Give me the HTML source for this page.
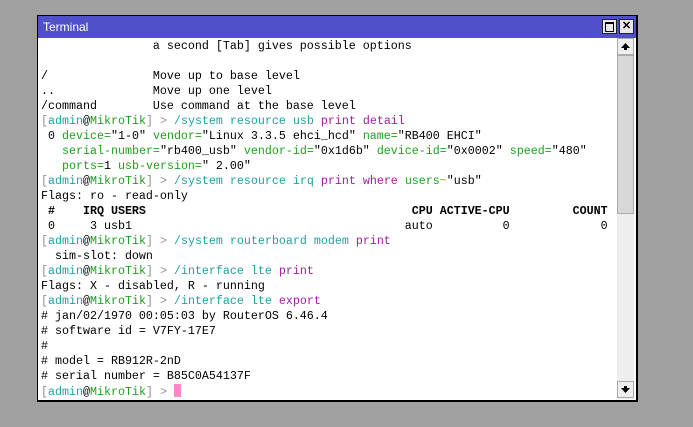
<!DOCTYPE html>
<html><head><meta charset="utf-8"><style>
html,body{margin:0;padding:0;width:693px;height:427px;background:#a0a0a0;overflow:hidden}
.win{position:absolute;left:37px;top:15px;width:598px;height:384px;border:1px solid #000;border-right:2px solid #000;border-bottom:2px solid #000;background:#fff}
.title{position:absolute;left:0;top:0;width:598px;height:22px;background:#5050c8;color:#fff;font:12px "Liberation Sans",sans-serif;line-height:22px}
.title span{position:absolute;left:5px;top:0}
.btn{position:absolute;top:3px;width:13px;height:13px;background:#e8e8e8;border:1px solid #222}
.term{position:absolute;left:3px;top:23px;margin:0;font:11.67px "Liberation Mono",monospace;line-height:15px;color:#000;white-space:pre}
.g{color:#909090}.t{color:#20a0a0}.m{color:#20a020}.p{color:#a020a0}.y{color:#b0a020}.b{font-weight:bold}
.sb{position:absolute;left:579px;top:22px;width:17px;height:361px;background:#eeeeee}
.arr{position:absolute;left:0;width:15px;height:15px;background:#eee;border:1px solid #aaa}
.thumb{position:absolute;left:0;top:17px;width:15px;height:157px;background:#d8d8d8;border:1px solid #aaa}
.cur{display:inline-block;width:7px;height:13px;background:#ff88c8;vertical-align:-2px}
</style></head><body>
<div class="win">
<div class="title"><span>Terminal</span>
<div class="btn" style="left:564px"><div style="position:absolute;left:2px;top:2px;width:7px;height:7px;border:1px solid #000;border-top-width:2px"></div></div>
<div class="btn" style="left:581px;font:bold 11px 'Liberation Sans',sans-serif;color:#000;text-align:center;line-height:13px">✕</div>
</div>
<pre class="term">                a second [Tab] gives possible options

/               Move up to base level
..              Move up one level
/command        Use command at the base level
<span class="g">[</span><span class="t">admin</span>@<span class="m">MikroTik</span><span class="g">]</span> <span class="g">&gt;</span> <span class="t">/system resource usb</span> <span class="p">print detail</span>
 0 <span class="m">device=</span>"1-0" <span class="m">vendor=</span>"Linux 3.3.5 ehci_hcd" <span class="m">name=</span>"RB400 EHCI"
   <span class="m">serial-number=</span>"rb400_usb" <span class="m">vendor-id=</span>"0x1d6b" <span class="m">device-id=</span>"0x0002" <span class="m">speed=</span>"480"
   <span class="m">ports=</span>1 <span class="m">usb-version=</span>" 2.00"
<span class="g">[</span><span class="t">admin</span>@<span class="m">MikroTik</span><span class="g">]</span> <span class="g">&gt;</span> <span class="t">/system resource irq</span> <span class="p">print where</span> <span class="m">users</span><span class="y">~</span>"usb"
Flags: ro - read-only
<span class="b"> #    IRQ USERS                                      CPU ACTIVE-CPU         COUNT</span>
 0     3 usb1                                       auto          0             0
<span class="g">[</span><span class="t">admin</span>@<span class="m">MikroTik</span><span class="g">]</span> <span class="g">&gt;</span> <span class="t">/system routerboard modem</span> <span class="p">print</span>
  sim-slot: down
<span class="g">[</span><span class="t">admin</span>@<span class="m">MikroTik</span><span class="g">]</span> <span class="g">&gt;</span> <span class="t">/interface lte</span> <span class="p">print</span>
Flags: X - disabled, R - running
<span class="g">[</span><span class="t">admin</span>@<span class="m">MikroTik</span><span class="g">]</span> <span class="g">&gt;</span> <span class="t">/interface lte</span> <span class="p">export</span>
# jan/02/1970 00:05:03 by RouterOS 6.46.4
# software id = V7FY-17E7
#
# model = RB912R-2nD
# serial number = B85C0A54137F
<span class="g">[</span><span class="t">admin</span>@<span class="m">MikroTik</span><span class="g">]</span> <span class="g">&gt;</span> <span class="cur"></span></pre>
<div class="sb">
<div class="arr" style="top:0"><svg width="15" height="15"><path d="M7.5 4L3 9h3v2h3V9h3z" fill="#000"/></svg></div>
<div class="thumb"></div>
<div class="arr" style="top:343px"><svg width="15" height="15"><path d="M7.5 11L3 6h3V4h3v2h3z" fill="#000"/></svg></div>
</div>
</div>
</body></html>
